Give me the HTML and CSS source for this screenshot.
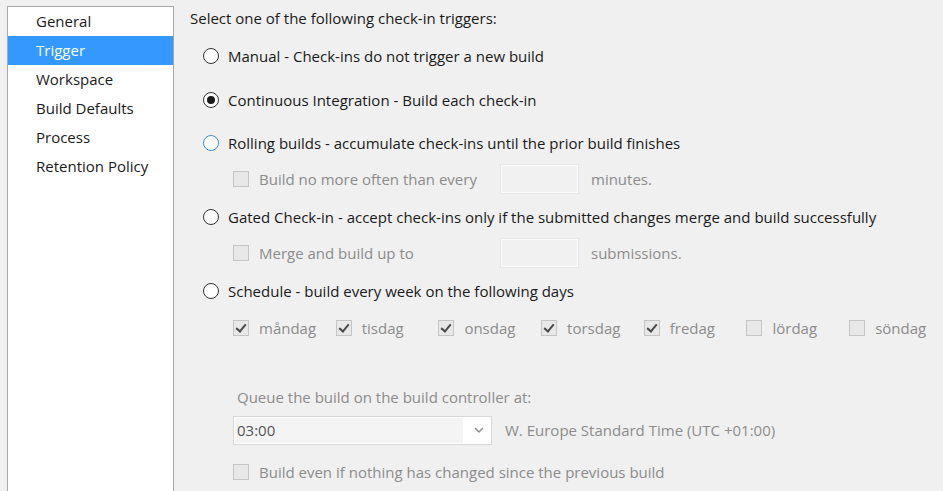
FILE: index.html
```html
<!DOCTYPE html>
<html>
<head>
<meta charset="utf-8">
<link rel="stylesheet" href="styles.css">
</head>
<body>
<div class="page">
  <nav class="sidebar">
    <div class="nav-item">General</div>
    <div class="nav-item selected">Trigger</div>
    <div class="nav-item">Workspace</div>
    <div class="nav-item">Build Defaults</div>
    <div class="nav-item">Process</div>
    <div class="nav-item">Retention Policy</div>
  </nav>
  <main class="content">
    <div class="row heading">Select one of the following check-in triggers:</div>

    <div class="row radio-row r-manual"><span class="radio"></span><span>Manual - Check-ins do not trigger a new build</span></div>
    <div class="row radio-row r-ci"><span class="radio checked"></span><span>Continuous Integration - Build each check-in</span></div>
    <div class="row radio-row r-rolling"><span class="radio focus"></span><span>Rolling builds - accumulate check-ins until the prior build finishes</span></div>
    <div class="row sub-row r-buildno disabled">
      <span class="sub-label"><span class="check"></span><span>Build no more often than every</span></span>
      <span class="num-box"></span>
      <span>minutes.</span>
    </div>
    <div class="row radio-row r-gated"><span class="radio"></span><span>Gated Check-in - accept check-ins only if the submitted changes merge and build successfully</span></div>
    <div class="row sub-row r-merge disabled">
      <span class="sub-label"><span class="check"></span><span>Merge and build up to</span></span>
      <span class="num-box"></span>
      <span>submissions.</span>
    </div>
    <div class="row radio-row r-schedule"><span class="radio"></span><span>Schedule - build every week on the following days</span></div>
    <div class="row days r-days disabled">
      <span class="day"><span class="check checked"></span><span>måndag</span></span>
      <span class="day"><span class="check checked"></span><span>tisdag</span></span>
      <span class="day"><span class="check checked"></span><span>onsdag</span></span>
      <span class="day"><span class="check checked"></span><span>torsdag</span></span>
      <span class="day"><span class="check checked"></span><span>fredag</span></span>
      <span class="day"><span class="check"></span><span>lördag</span></span>
      <span class="day"><span class="check"></span><span>söndag</span></span>
    </div>
    <div class="row r-queue disabled queue-label">Queue the build on the build controller at:</div>
    <div class="row r-select disabled">
      <span class="select">
        <span class="select-value">03:00</span>
        <span class="select-btn"><svg width="10" height="6" viewBox="0 0 10 6"><path d="M1 1 L5 5 L9 1" fill="none" stroke="#8a8a8a" stroke-width="1.4"/></svg></span>
      </span>
      <span class="tz">W. Europe Standard Time (UTC +01:00)</span>
    </div>
    <div class="row sub-row r-even disabled">
      <span class="check"></span><span class="even-text">Build even if nothing has changed since the previous build</span>
    </div>
  </main>
</div>
</body>
</html>
```

FILE: styles.css
```css
html, body {
  margin: 0;
  padding: 0;
  height: 100%;
  overflow: hidden;
  background: #f0f0f0;
  font-family: "Open Sans", "Noto Sans", sans-serif;
  font-size: 15px;
  color: #1a1a1a;
}

.page {
  display: flex;
  align-items: stretch;
  height: 100%;
}

.sidebar {
  margin: 6px 0 0 7px;
  width: 165px;
  flex: none;
  background: #ffffff;
  border: 1px solid #a8a8a8;
  border-bottom: none;
  padding: 0;
}

.nav-item {
  height: 29px;
  line-height: 29px;
  padding-left: 28px;
  color: #1a1a1a;
}

.nav-item.selected {
  background: #3399ff;
  color: #ffffff;
}

.content {
  flex: 1;
  padding-left: 16px;
  display: flex;
  flex-direction: column;
}

.row {
  height: 28px;
  display: flex;
  align-items: center;
  white-space: nowrap;
  flex: none;
}

.heading { margin-top: 4px; }
.r-manual { margin-top: 10px; }
.r-ci { margin-top: 16px; }
.r-rolling { margin-top: 15px; }
.r-buildno { margin-top: 8px; }
.r-gated { margin-top: 10px; }
.r-merge { margin-top: 8px; }
.r-schedule { margin-top: 10px; }
.r-days { margin-top: 9px; }
.r-queue { margin-top: 41px; }
.r-select { margin-top: 5px; }
.r-even { margin-top: 14px; }

.radio-row { padding-left: 13px; }

.radio {
  width: 14px;
  height: 14px;
  border: 1px solid #333333;
  border-radius: 50%;
  background: #ffffff;
  margin-right: 9px;
  flex: none;
  position: relative;
}

.radio.focus { border-color: #3c8fdc; }

.radio.checked::after {
  content: "";
  position: absolute;
  left: 3px;
  top: 3px;
  width: 8px;
  height: 8px;
  border-radius: 50%;
  background: #1a1a1a;
}

.disabled { color: #8c8c8c; }

.sub-row { padding-left: 43px; }

.sub-label {
  display: flex;
  align-items: center;
  width: 268px;
  flex: none;
}

.check {
  width: 14px;
  height: 14px;
  border: 1px solid #c4c4c4;
  background: #e8e8e8;
  margin-right: 10px;
  flex: none;
  position: relative;
}

.check.checked::after {
  content: "";
  position: absolute;
  left: 4px;
  top: 1px;
  width: 4px;
  height: 8px;
  border-right: 2px solid #4a4a4a;
  border-bottom: 2px solid #4a4a4a;
  transform: rotate(40deg);
}

.num-box {
  width: 75px;
  height: 26px;
  border: 1px solid #fbfbfb;
  box-shadow: 0 0 0 1px #e6e6e6;
  background: #f1f1f1;
  margin-right: 13px;
  flex: none;
}

.days {
  padding-left: 43px;
  display: grid;
  grid-template-columns: repeat(7, 102.7px);
  align-items: center;
}

.day {
  display: flex;
  align-items: center;
}

.queue-label { padding-left: 47px; }

.r-select { padding-left: 43px; }

.select {
  display: flex;
  width: 257px;
  height: 27px;
  border: 1px solid #d8d8d8;
  background: #ffffff;
  margin-right: 13px;
  flex: none;
}

.select-value {
  flex: 1;
  background: #f4f4f4;
  margin: 1px 0 1px 1px;
  padding-left: 2px;
  display: flex;
  align-items: center;
  color: #555555;
}

.select-btn {
  width: 25px;
  display: flex;
  align-items: center;
  justify-content: center;
  padding-left: 3px;
}
```
